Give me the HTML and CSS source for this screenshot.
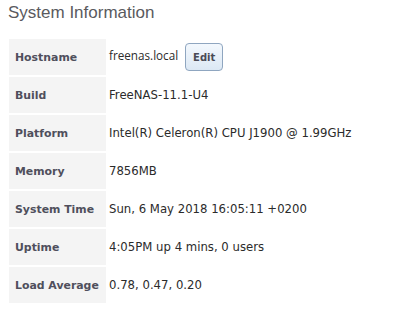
FILE: index.html
```html
<!DOCTYPE html>
<html lang="en">
<head>
  <meta charset="UTF-8" />
  <title>System Information</title>
  <link rel="stylesheet" href="styles.css">
</head>
<body>
  <div class="panel">
    <h2 class="title">System Information</h2>

    <div class="info-grid">
      <div class="label">Hostname</div>
      <div class="value">
        <span class="hostname">freenas.local</span>
        <button class="edit-btn">Edit</button>
      </div>

      <div class="label">Build</div>
      <div class="value">FreeNAS-11.1-U4</div>

      <div class="label">Platform</div>
      <div class="value">Intel(R) Celeron(R) CPU J1900 @ 1.99GHz</div>

      <div class="label">Memory</div>
      <div class="value">7856MB</div>

      <div class="label">System Time</div>
      <div class="value">Sun, 6 May 2018 16:05:11 +0200</div>

      <div class="label">Uptime</div>
      <div class="value">4:05PM up 4 mins, 0 users</div>

      <div class="label">Load Average</div>
      <div class="value">0.78, 0.47, 0.20</div>
    </div>
  </div>
</body>
</html>
```

FILE: styles.css
```css
body {
  margin: 0;
  padding: 0;
  background: #fff;
  font-family: 'DejaVu Sans', Verdana, sans-serif;
}

.panel {
  padding: 1px 8px 0 9px;
}

.title {
  margin: 0 0 15px -1px;
  font-family: 'Liberation Sans', Arial, sans-serif;
  font-weight: 400;
  font-size: 17px;
  line-height: 23px;
  color: #5a5a5e;
}

.info-grid {
  display: grid;
  grid-template-columns: 97px auto;
  grid-auto-rows: 36px;
  row-gap: 2px;
  column-gap: 2px;
}

.label {
  background: #f4f4f4;
  display: flex;
  align-items: center;
  padding-left: 6px;
  font-size: 10.9px;
  font-weight: bold;
  color: #4f4f5c;
}

.value {
  display: flex;
  align-items: center;
  padding-left: 1px;
  font-size: 11.7px;
  color: #2b2b2b;
}

.hostname {
  font-family: 'Open Sans', 'Liberation Sans', sans-serif;
  font-size: 11.7px;
  margin-top: -4px;
}

.edit-btn {
  margin-left: 7px;
  width: 38px;
  height: 28px;
  padding: 0;
  border: 1px solid #8fa6c0;
  border-radius: 4px;
  background: linear-gradient(to bottom, #f3f8fd, #dce8f4);
  font-family: 'DejaVu Sans', Verdana, sans-serif;
  font-size: 10px;
  font-weight: bold;
  color: #4a4a55;
  cursor: pointer;
}
```
